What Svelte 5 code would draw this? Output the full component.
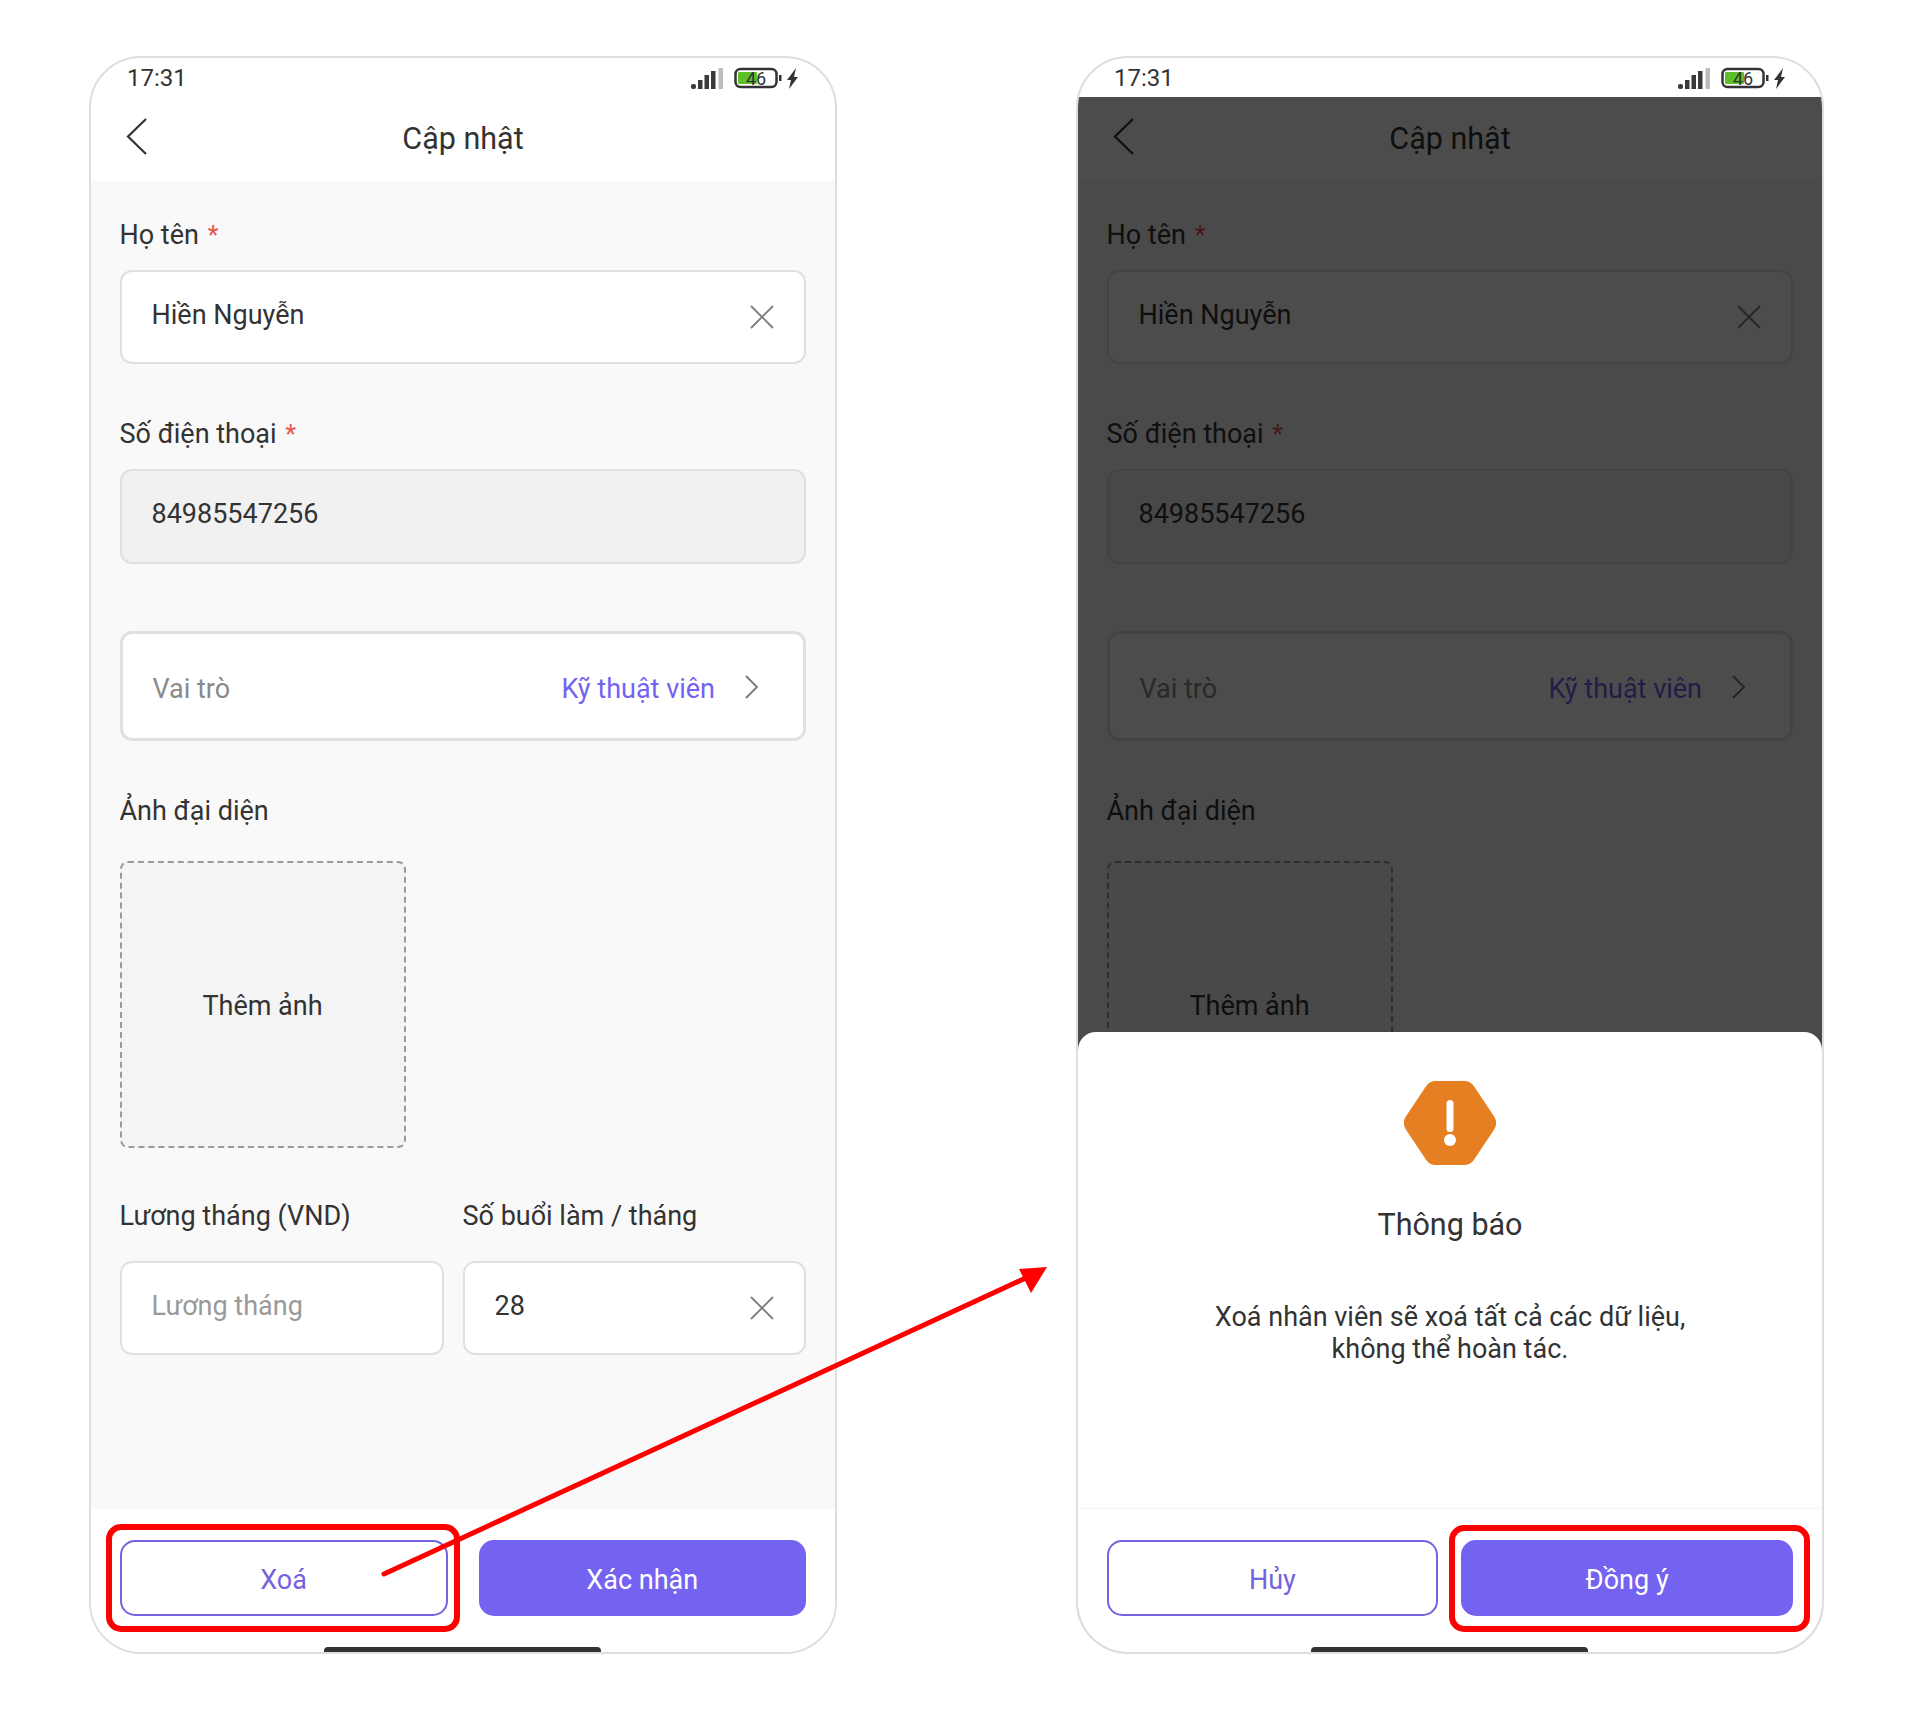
<script>
</script>

{#snippet x()}
  <svg class="x" viewBox="0 0 24 24" fill="none" stroke="#7c7c7c" stroke-width="1.8"><path d="M1 1l22 22M23 1L1 23"/></svg>
{/snippet}

{#snippet status()}
  <div class="status">
    <span class="time">17:31</span>
    <svg class="sys" width="110" height="24" viewBox="0 0 110 24">
      <g fill="#3a3a3a">
        <rect x="0" y="17" width="5" height="5" rx="2"/>
        <rect x="7" y="13" width="4.500" height="9"/>
        <rect x="13.500" y="8" width="4.500" height="14"/>
        <rect x="20" y="4" width="4.500" height="18"/>
      </g>
      <rect x="27.500" y="1" width="4.500" height="21" fill="#bdbdbd"/>
      <rect x="44.500" y="2" width="41" height="18" rx="5" fill="#fff" stroke="#333" stroke-width="2.500"/>
      <rect x="47" y="5" width="19" height="12" rx="1" fill="#5cc126"/>
      <text x="65" y="17.500" text-anchor="middle" class="batt">46</text>
      <rect x="88" y="8" width="2.500" height="6" fill="#333"/>
      <path d="M106 1l-9 12h4l-2 9 9-12h-4z" fill="#333" transform="translate(-1 0)"/>
    </svg>
  </div>
{/snippet}

{#snippet form()}
  <div class="top">
    <svg class="back" viewBox="0 0 21 37" fill="none" stroke="#333" stroke-width="2.200"><path d="M20 1L2 18.500 20 36"/></svg>
    <h1>Cập nhật</h1>
  </div>
  <div class="content">
    <div class="lbl first">Họ tên <i>*</i></div>
    <div class="input"><span>Hiền Nguyễn</span>{@render x()}</div>
    <div class="lbl second">Số điện thoại <i>*</i></div>
    <div class="input disabled"><span>84985547256</span></div>
    <div class="input role">
      <span class="muted">Vai trò</span>
      <span class="val">Kỹ thuật viên</span>
      <svg class="chev" viewBox="0 0 13 24" fill="none" stroke="#777" stroke-width="1.800"><path d="M1 1l11 11L1 23"/></svg>
    </div>
    <div class="lbl third">Ảnh đại diện</div>
    <div class="upload">Thêm ảnh</div>
    <div class="cols">
      <div class="col left">
        <div class="lbl">Lương tháng (VND)</div>
        <div class="input last"><span class="ph">Lương tháng</span></div>
      </div>
      <div class="col right">
        <div class="lbl">Số buổi làm / tháng</div>
        <div class="input last"><span>28</span>{@render x()}</div>
      </div>
    </div>
  </div>
{/snippet}

<div class="page">
  <section class="phone">
    {@render status()}
    {@render form()}
    <div class="footer one">
      <button class="btn ghost">Xoá</button>
      <button class="btn solid">Xác nhận</button>
    </div>
    <div class="home"></div>
  </section>

  <section class="phone">
    {@render status()}
    {@render form()}
    <div class="footer"></div>
    <div class="home"></div>
    <div class="dim"></div>
    <div class="sheet">
      <svg class="warn" width="92" height="84" viewBox="0 0 92 84">
        <polygon points="32,12 60,12 80,42 60,72 32,72 12,42" fill="#e67e22" stroke="#e67e22" stroke-width="24" stroke-linejoin="round"/>
        <rect x="42.500" y="19" width="7" height="32" rx="3.500" fill="#fff"/>
        <circle cx="46" cy="59" r="6" fill="#fff"/>
      </svg>
      <h2>Thông báo</h2>
      <p>Xoá nhân viên sẽ xoá tất cả các dữ liệu,<br/>không thể hoàn tác.</p>
      <div class="footer two">
        <button class="btn ghost">Hủy</button>
        <button class="btn solid">Đồng ý</button>
      </div>
      <div class="home"></div>
    </div>
  </section>

  <svg class="marks" width="1920" height="1709" viewBox="0 0 1920 1709" fill="none">
    <rect x="109" y="1527" width="348" height="102" rx="12" stroke="#f00" stroke-width="6"/>
    <rect x="1452" y="1528" width="355" height="101" rx="12" stroke="#f00" stroke-width="6"/>
    <path d="M384 1574L1030 1276" stroke="#f00" stroke-width="5" stroke-linecap="round"/>
    <path d="M1047 1267L1019 1269L1031 1293z" fill="#f00"/>
  </svg>
</div>

<style>
  :global(body) { margin: 0; background: #fff; }
  .page {
    position: relative;
    box-sizing: border-box;
    width: 1920px;
    height: 1709px;
    padding: 56px 0 0 89px;
    display: flex;
    gap: 239px;
    font-family: Roboto, "Noto Sans", sans-serif;
    color: #333;
  }
  .phone {
    position: relative;
    box-sizing: border-box;
    width: 748px;
    height: 1598px;
    border: 2px solid #dedede;
    border-radius: 52px;
    background: #fff;
    display: flex;
    flex-direction: column;
    overflow: hidden;
  }
  .status {
    height: 39px;
    flex: none;
    display: flex;
    align-items: center;
    justify-content: space-between;
    padding: 0 34px 0 36px;
  }
  .time { font-size: 24px; line-height: 30px; margin-top: 1px; }
  .sys { margin-top: 2px; }
  .batt { font: 18px Roboto, sans-serif; fill: #333; }
  .top {
    position: relative;
    height: 84px;
    flex: none;
    display: flex;
    align-items: center;
    justify-content: center;
  }
  .back { position: absolute; left: 35px; top: 21px; width: 21px; height: 37px; }
  h1 { margin: 0; font-size: 30.500px; font-weight: 400; line-height: 40px; }
  .content {
    height: 1328px;
    flex: none;
    background: #f9f9f9;
    padding: 0 29px 0 28.500px;
    box-sizing: border-box;
  }
  .lbl { font-size: 27px; line-height: 34px; }
  .lbl i { color: #e8554c; font-style: normal; font-size: 25px; line-height: 0; margin-left: 2px; }
  .first { padding-top: 37px; margin-bottom: 18px; }
  .second { margin: 53px 0 18px; }
  .third { margin: 53px 0 33px; }
  .input {
    box-sizing: border-box;
    height: 94px;
    border: 2px solid #e0e0e0;
    border-radius: 12px;
    background: #fff;
    display: flex;
    align-items: center;
    justify-content: space-between;
    padding: 0 30px 4px 30px;
    font-size: 27px;
  }
  .x { width: 24px; height: 24px; margin-top: 4px; }
  .disabled { background: #f1f1f1; height: 95px; padding-bottom: 6px; }
  .role { height: 110px; margin-top: 67px; border-width: 3px; justify-content: flex-start; padding-left: 30px; padding-top: 6px; padding-bottom: 0; padding-right: 45px; }
  .muted { color: #8a8a8a; }
  .val { color: #7463f1; margin-left: auto; }
  .chev { width: 13px; height: 24px; margin-left: 30px; margin-top: -5px; }
  .upload {
    box-sizing: border-box;
    width: 286px;
    height: 287px;
    border: 2px dashed #9a9a9a;
    border-radius: 8px;
    background: #f4f4f4;
    display: flex;
    align-items: center;
    justify-content: center;
    padding-top: 2px;
    font-size: 27px;
  }
  .cols { display: flex; gap: 19px; margin-top: 51px; }
  .col .input { margin-top: 28px; }
  .left { width: 324px; }
  .right { flex: 1; }
  .ph { color: #999; }
  .footer { flex: 1; background: #fff; }
  .footer.one, .footer.two {
    display: flex;
    align-items: flex-start;
    box-sizing: border-box;
    padding: 31px 29px 0 28.500px;
  }
  .footer.one { gap: 31px; }
  .footer.one .ghost { width: 328px; }
  .footer.one .solid { flex: 1; }
  .footer.two {
    gap: 23px;
    flex: none;
    height: 144px;
    width: 100%;
    border-top: 1px solid #f5f5f5;
    position: absolute;
    bottom: 0;
    padding-top: 31px;
  }
  .footer.two .btn { width: 332px; }
  .btn {
    box-sizing: border-box;
    height: 76px;
    border-radius: 15px;
    font: 27px Roboto, sans-serif;
    padding: 3px 0 0;
    margin: 0;
  }
  .ghost { background: #fff; border: 2px solid #7463e0; color: #7463e0; }
  .solid { background: #7463f1; border: 0; color: #fff; }
  .home {
    position: absolute;
    left: 233px;
    bottom: -1px;
    width: 277px;
    height: 6px;
    background: #333;
    border-radius: 4px 4px 0 0;
  }
  .dim {
    position: absolute;
    left: 0;
    right: 0;
    top: 39px;
    bottom: 0;
    background: rgba(0, 0, 0, 0.7);
  }
  .sheet {
    position: absolute;
    left: 0;
    right: 0;
    bottom: 0;
    height: 620px;
    background: #fff;
    border-radius: 18px 18px 0 0;
    display: flex;
    flex-direction: column;
    align-items: center;
    padding-top: 49px;
    box-sizing: border-box;
  }
  .warn { flex: none; }
  h2 { margin: 40px 0 0; font-size: 30.500px; font-weight: 400; line-height: 40px; }
  p { margin: 56px 0 0; font-size: 27px; line-height: 32px; text-align: center; }
  .marks { position: absolute; left: 0; top: 0; pointer-events: none; }
</style>
